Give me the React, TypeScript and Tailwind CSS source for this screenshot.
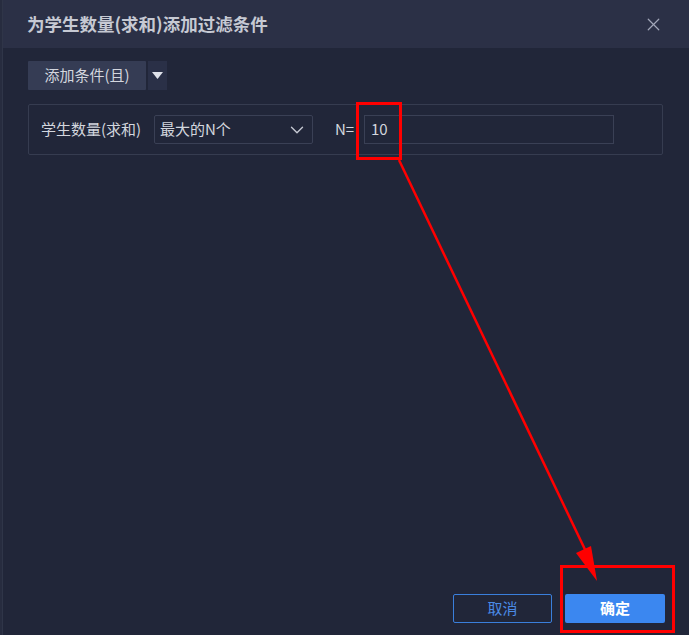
import { ChevronDown, X } from "lucide-react";

const FONT = { fontFamily: '"Noto Sans CJK SC", "Noto Sans", sans-serif' };

export default function App() {
  return (
    <div className="relative flex w-[689px] h-[635px] overflow-hidden bg-[#212639]" style={FONT}>
      {/* edge of the page behind the dialog */}
      <div className="w-[3px] h-full bg-[#272c3f] border-r border-[#2f3548] flex-shrink-0" />

      <div className="flex-1 flex flex-col">
        {/* Header */}
        <div className="h-[48px] flex items-center justify-between pl-6 pr-[25px] bg-[#2b3046] flex-shrink-0">
          <span className="text-[17.5px] font-bold text-[#c6c9d3]">为学生数量(求和)添加过滤条件</span>
          <X size={21} strokeWidth={1.4} className="text-[#a1a6b8]" />
        </div>

        {/* Body */}
        <div className="flex-1 pt-[13px] pl-[25px] pr-[26px]">
          <div className="flex h-[29px] gap-[2px]">
            <button className="w-[118px] h-full bg-[#353c54] text-[15px] text-[#d3d6de] rounded-[1px]">添加条件(且)</button>
            <button className="w-[19px] h-full bg-[#2a3047] flex items-center justify-center">
              <svg width="11" height="7" viewBox="0 0 11 7"><path d="M0 0h11L5.5 7z" fill="#dfe2ea" /></svg>
            </button>
          </div>

          <div className="mt-[14px] h-[51px] border border-[#363c50] rounded-[2px] flex items-center pl-[12px]">
            <span className="text-[15px] text-[#d3d6de] w-[113px]">学生数量(求和)</span>
            <div className="w-[159px] h-[29px] border border-[#3a4055] rounded-[2px] flex items-center justify-between pl-[5px] pr-[4px]">
              <span className="text-[15px] text-[#d3d6de]">最大的N个</span>
              <ChevronDown size={22} strokeWidth={1.5} className="text-[#c5c8d2]" />
            </div>
            <span className="ml-[22px] text-[15px] text-[#d3d6de] w-[29px]">N=</span>
            <div className="w-[250px] h-[29px] border border-[#3a4055] flex items-center pl-[6px]">
              <span className="text-[15px] text-[#d3d6de]">10</span>
            </div>
          </div>
        </div>

        {/* Footer */}
        <div className="flex justify-end gap-[13px] pr-[24px] pb-[12px]">
          <button className="w-[99px] h-[29px] border border-[#3a7fdc] rounded-[2px] text-[15px] text-[#4a8ae6]">取消</button>
          <button className="w-[100px] h-[29px] bg-[#3b87f0] rounded-[2px] text-[15px] font-bold text-white">确定</button>
        </div>
      </div>

      {/* Red annotations */}
      <svg className="absolute inset-0 pointer-events-none" width="689" height="635" viewBox="0 0 689 635">
        <rect x="357.5" y="103.5" width="43" height="55" fill="none" stroke="#ff0000" strokeWidth="3" />
        <line x1="399" y1="160" x2="590" y2="560" stroke="#ff0000" strokeWidth="2.5" />
        <path d="M576 553 L591 546 L597 581 Z" fill="#ff0000" />
        <rect x="561.5" y="566.5" width="112" height="65" fill="none" stroke="#ff0000" strokeWidth="3" />
      </svg>
    </div>
  );
}
